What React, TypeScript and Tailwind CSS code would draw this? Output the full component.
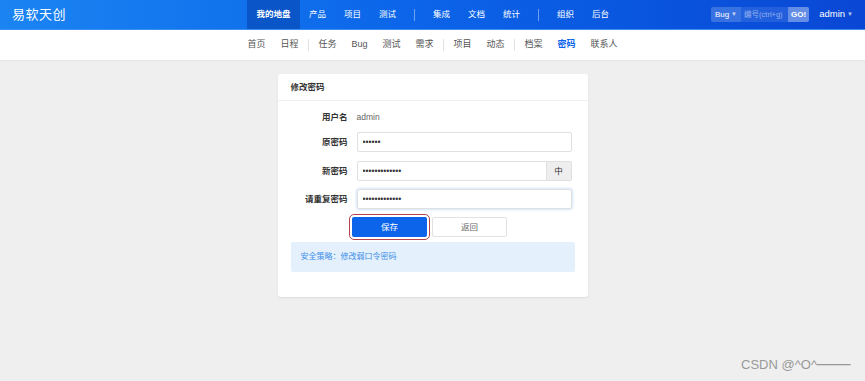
import type { ReactNode } from "react";

const mainNav = ["我的地盘", "产品", "项目", "测试", "|", "集成", "文档", "统计", "|", "组织", "后台"];
const subNav = ["首页", "日程", "|", "任务", "Bug", "测试", "需求", "|", "项目", "动态", "|", "档案", "密码", "联系人"];

function Header() {
    return (
        <div className="h-[30px] grid grid-cols-[1fr_auto_1fr] items-stretch bg-gradient-to-r from-[#1b84f2] via-[#0c63e8] to-[#0a47d4] border-b border-[#3c8ef3] text-white">
            <div className="flex items-center pl-[12px] text-[13px] tracking-[0.5px]">易软天创</div>
            <nav className="flex items-stretch text-[8.5px]">
                {mainNav.map((item, i) =>
                    item === "|" ? (
                        <span key={i} className="self-center w-px h-[12px] bg-white/40 mx-[9px]" />
                    ) : (
                        <a
                            key={i}
                            className={
                                i === 0
                                    ? "flex items-center px-[9.5px] bg-[#0a56c8] font-bold"
                                    : "flex items-center px-[9px]"
                            }
                        >
                            {item}
                        </a>
                    )
                )}
            </nav>
            <div className="flex items-center justify-end pr-[12px]">
                <div className="flex h-[15px] items-stretch bg-white/10 rounded-[2px] text-[8px] overflow-hidden">
                    <span className="flex items-center gap-[2px] px-[4px] bg-white/10">
                        Bug <span className="text-[6px] text-white/70">▼</span>
                    </span>
                    <span className="flex items-center w-[47px] px-[3px] text-[7.5px] text-white/50 whitespace-nowrap">编号(ctrl+g)</span>
                    <span className="flex items-center px-[3px] bg-white/30 font-bold">GO!</span>
                </div>
                <span className="ml-[10px] flex items-center gap-[2px] text-[9.5px]">
                    admin <span className="text-[6px] text-white/70">▼</span>
                </span>
            </div>
        </div>
    );
}

function SubNav() {
    return (
        <div className="h-[31px] bg-white border-b border-[#e4e4e4] flex items-center justify-center text-[9px] text-[#555]">
            {subNav.map((item, i) =>
                item === "|" ? (
                    <span key={i} className="w-px h-[12px] bg-[#e2e2e2] mx-[2px]" />
                ) : (
                    <a key={i} className={item === "密码" ? "px-[7.5px] text-[#0c64eb] font-bold" : "px-[7.5px]"}>
                        {item}
                    </a>
                )
            )}
        </div>
    );
}

function Field({ label, children, className }: { label: string; children: ReactNode; className?: string }) {
    return (
        <div className={"flex items-center h-[20px] " + (className ?? "")}>
            <label className="w-[57px] text-right font-bold text-[#333] text-[8.5px] shrink-0">{label}</label>
            <div className="ml-[9px] w-[215px] flex">{children}</div>
        </div>
    );
}

const inputCls = "h-[20px] w-full border border-[#e0e0e0] rounded-[2px] bg-white pl-[5px] text-[8.5px] text-[#333] outline-none";

export default function App() {
    return (
        <div className="relative min-h-[381px] bg-[#efefef] font-['Liberation_Sans','Noto_Sans_CJK_SC',sans-serif]">
            <Header />
            <SubNav />
            <main className="flex justify-center pt-[13px]">
                <div className="w-[310px] bg-white rounded-[3px] shadow-[0_1px_2px_rgba(0,0,0,0.08)]">
                    <div className="h-[27px] flex items-center px-[13px] border-b border-[#f0f0f0] text-[8.5px] font-bold text-[#333]">
                        修改密码
                    </div>
                    <div className="px-[13px] pt-[6px] pb-[25px]">
                        <Field label="用户名">
                            <span className="text-[8.5px] text-[#666]">admin</span>
                        </Field>
                        <Field label="原密码" className="mt-[5px]">
                            <input type="password" readOnly defaultValue="abcdef" className={inputCls} />
                        </Field>
                        <Field label="新密码" className="mt-[9px]">
                            <input type="password" readOnly defaultValue="abcdefghijklm" className={inputCls + " rounded-r-none"} />
                            <span className="w-[25px] shrink-0 h-[20px] flex items-center justify-center bg-[#eeeeee] border border-l-0 border-[#e0e0e0] rounded-r-[2px] text-[8.5px] text-[#333]">
                                中
                            </span>
                        </Field>
                        <Field label="请重复密码" className="mt-[8px]">
                            <input
                                type="password"
                                readOnly
                                defaultValue="abcdefghijklm"
                                className={inputCls + " border-[#5c9cf2] shadow-[0_0_3px_rgba(60,140,240,0.45)]"}
                            />
                        </Field>
                        <div className="mt-[8px] flex justify-center gap-[5px] pr-[6px]">
                            <button className="w-[75px] h-[20px] bg-[#0c64eb] text-white text-[8.5px] rounded-[2px] outline outline-[1.5px] outline-[#b5434b] outline-offset-[2px]">
                                保存
                            </button>
                            <button className="w-[75px] h-[20px] bg-white border border-[#e2e2e2] text-[#666] text-[8.5px] rounded-[2px]">
                                返回
                            </button>
                        </div>
                        <div className="mt-[5px] h-[30px] flex items-center px-[10px] bg-[#e4f0fc] rounded-[2px] text-[8px] text-[#3d8fe8]">
                            安全策略：修改弱口令密码
                        </div>
                    </div>
                </div>
            </main>
            <div className="absolute right-[15px] bottom-[7px] text-[13px] text-[#999] font-['Liberation_Sans',sans-serif] whitespace-nowrap">
                CSDN @^O^<span className="text-[17px] leading-none tracking-[-0.5px]">——</span>
            </div>
        </div>
    );
}
